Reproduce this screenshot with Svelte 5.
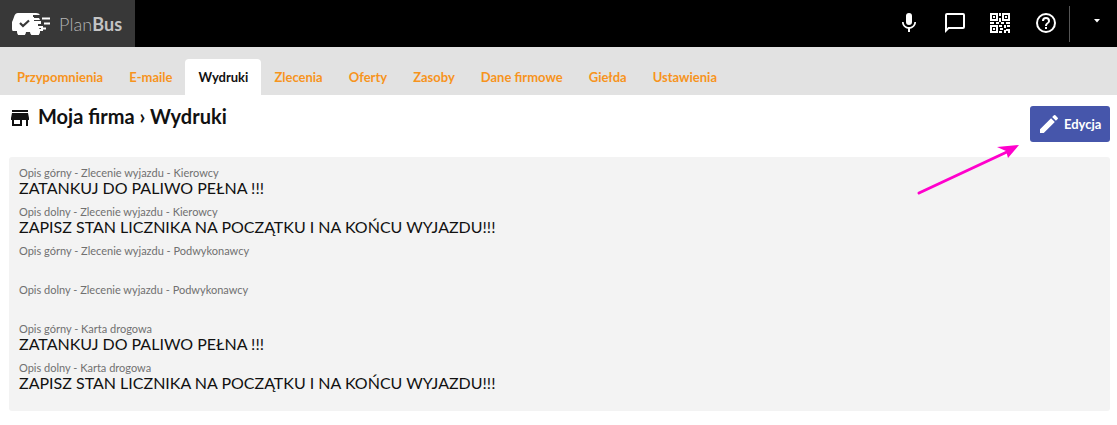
<script>
  const tabs = ['Przypomnienia','E-maile','Wydruki','Zlecenia','Oferty','Zasoby','Dane firmowe','Giełda','Ustawienia'];
  const a = 'ZATANKUJ DO PALIWO PEŁNA !!!';
  const b = 'ZAPISZ STAN LICZNIKA NA POCZĄTKU I NA KOŃCU WYJAZDU!!!';
  const rows = [
    ['Opis górny - Zlecenie wyjazdu - Kierowcy', a],
    ['Opis dolny - Zlecenie wyjazdu - Kierowcy', b],
    ['Opis górny - Zlecenie wyjazdu - Podwykonawcy', ''],
    ['Opis dolny - Zlecenie wyjazdu - Podwykonawcy', ''],
    ['Opis górny - Karta drogowa', a],
    ['Opis dolny - Karta drogowa', b]
  ];
</script>

<div class="page">
  <header class="top">
    <div class="brand">
      <svg class="logo" width="38" height="22" viewBox="0 0 38 22" fill="#fff">
        <path d="M6 0H24Q27 0 28 2H21V5H27L28 7H21V18H1Q0 18 0 16V9Q1 7 2 4Q3 0 6 0z"/>
        <path d="M18 4H22V19H18z"/>
        <path d="M5 16H31V18H28A5 5 0 0 1 18 19H14A4 4 0 0 1 5 19z" />
        <circle cx="9.500" cy="17.500" r="3.800"/>
        <circle cx="24" cy="17.500" r="3.800"/>
        <path d="M20 8H29V11H26V13H31V15H24V17H20z"/>
        <path d="M8 10l3 3 6-5.500" fill="none" stroke="#383838" stroke-width="2.200"/>
        <rect x="30" y="4.500" width="8" height="2"/>
        <rect x="32" y="9.500" width="6" height="2"/>
        <rect x="29" y="14.500" width="5" height="2"/>
      </svg>
      <span class="name">Plan<b>Bus</b></span>
    </div>
    <div class="actions">
      <svg class="ic mic" width="24" height="24" viewBox="0 0 24 24" fill="#fff"><path d="M12 14a3 3 0 0 0 3-3V5a3 3 0 0 0-6 0v6a3 3 0 0 0 3 3zm5.300-3c0 3-2.500 5.100-5.300 5.100S6.700 14 6.700 11H5c0 3.400 2.700 6.200 6 6.700V21h2v-3.300c3.300-.5 6-3.300 6-6.700z"/></svg>
      <svg class="ic chat" width="24" height="24" viewBox="0 0 24 24" fill="#fff"><path d="M20 2H4a2 2 0 0 0-2 2v18l4-4h14a2 2 0 0 0 2-2V4a2 2 0 0 0-2-2zm0 14H5.200L4 17.200V4h16z"/></svg>
      <svg class="ic qr" width="20" height="20" viewBox="0 0 20 20" fill="#fff">
        <path fill-rule="evenodd" d="M0 0h8v8H0zM2 2v4h4V2zM12 0h8v8h-8zM14 2v4h4V2zM0 12h8v8H0zM2 14v4h4v-4z"/>
        <rect x="3" y="3" width="2" height="2"/><rect x="15" y="3" width="2" height="2"/><rect x="3" y="15" width="2" height="2"/>
        <path d="M9 0h2v3H9zM9 5h2v4H9zM0 9h4v2H0zM6 9h3v2H6zM11 9h3v2h-3zM16 9h4v2h-4zM9 12h3v2H9zM14 12h2v3h-2zM17 12h3v2h-3zM10 15h3v2h-3zM16 16h4v2h-4zM9 18h3v2H9zM14 17h2v3h-2zM18 18h2v2h-2z"/>
      </svg>
      <svg class="ic help" width="24" height="24" viewBox="0 0 24 24" fill="#fff"><path d="M11 18h2v-2h-2zm1-16a10 10 0 1 0 0 20 10 10 0 0 0 0-20zm0 18a8 8 0 1 1 0-16 8 8 0 0 1 0 16zm0-14a4 4 0 0 0-4 4h2a2 2 0 1 1 4 0c0 2-3 1.750-3 5h2c0-2.250 3-2.500 3-5a4 4 0 0 0-4-4z"/></svg>
      <span class="sep"></span>
      <svg class="caret" width="10" height="6" viewBox="0 0 10 6" fill="#fff"><path d="M2 1h6L5 4.500z"/></svg>
    </div>
  </header>

  <nav class="tabs">
    {#each tabs as t}
      <span class="tab" class:active={t === 'Wydruki'}>{t}</span>
    {/each}
  </nav>

  <div class="head">
    <h1>
      <svg width="24" height="24" viewBox="0 0 24 24" fill="#111"><path d="M20 4H4v2h16zm1 10v-2l-1-5H4l-1 5v2h1v6h10v-6h4v6h2v-6zm-9 4H6v-4h6z"/></svg>
      Moja firma › Wydruki
    </h1>
    <button class="edit">
      <svg width="24" height="24" viewBox="0 0 24 24" fill="#fff"><path d="M3 17.250V21h3.750L17.810 9.940l-3.750-3.750zM20.710 7.040a1 1 0 0 0 0-1.410l-2.340-2.340a1 1 0 0 0-1.410 0l-1.830 1.830 3.750 3.750z"/></svg>
      Edycja
    </button>
    <svg class="arrow" width="110" height="60" viewBox="0 0 110 60">
      <path d="M2 50 L92 8" stroke="#ff00cc" stroke-width="3" stroke-linecap="round" fill="none"/>
      <path d="M102 2 L80 4 L89 8 L91 15 z" fill="#ff00cc"/>
    </svg>
  </div>

  <section class="panel">
    {#each rows as r}
      <div class="row">
        <div class="lab">{r[0]}</div>
        <div class="val">{r[1]}</div>
      </div>
    {/each}
  </section>
</div>

<style>
  :global(body) { margin: 0; background: #fff; }
  .page { width: 1117px; height: 425px; overflow: hidden; font-family: Lato, sans-serif; color: #111; }
  .top { height: 47px; background: #000; display: flex; justify-content: space-between; }
  .brand { width: 135px; background: #383838; display: flex; align-items: center; padding-left: 12px; gap: 9px; box-sizing: border-box; }
  .name { font-size: 18px; color: #b5b5b5; font-weight: 300; letter-spacing: 0.1px; }
  .name b { font-weight: 700; color: #c4c4c4; }
  .actions { display: flex; align-items: center; padding-right: 15px; position: relative; }
  .mic { margin-right: 22px; }
  .chat { margin-right: 23px; }
  .qr { margin-right: 24px; margin-top: -2px; }
  .help { margin-right: 12px; }
  .ic { margin-top: -2px; position: relative; left: 3px; }
  .sep { width: 1px; height: 36px; background: #555; margin-right: 22px; margin-left: 2px; }
  .caret { margin-top: -5px; }
  .tabs { height: 48px; background: #e2e2e2; display: flex; align-items: flex-end; padding-left: 4px; font-size: 13px; font-weight: 700; }
  .tab { height: 36px; padding: 0 13px; display: flex; align-items: center; color: #f7941d; border-radius: 4px 4px 0 0; box-sizing: border-box; }
  .tab.active { background: #fff; color: #111; }
  .head { position: relative; height: 62px; }
  h1 { margin: 0; padding: 8px 0 0 8px; font-size: 20px; font-weight: 700; line-height: 26px; display: flex; align-items: center; gap: 6px; color: #111; }
  h1 svg { width: 24px; height: 24px; margin: 2px 0 -2px; }
  .edit { position: absolute; left: 1030px; top: 11px; width: 80px; height: 36px; background: #4656ab; color: #fff; border: 0; border-radius: 3px; font: 700 13px Lato, sans-serif; display: flex; align-items: center; gap: 3px; padding: 0 0 0 7px; }
  .arrow { position: absolute; left: 917px; top: 48px; }
  .panel { margin: 0 7px 0 9px; background: #f3f3f3; border-radius: 3px; padding: 9px 10px; height: 254px; box-sizing: border-box; }
  .row { height: 39px; }
  .lab { font-size: 11px; line-height: 14px; color: #707070; }
  .val { font-size: 16px; line-height: 18px; color: #111; min-height: 18px; margin-top: -1px; }
</style>
